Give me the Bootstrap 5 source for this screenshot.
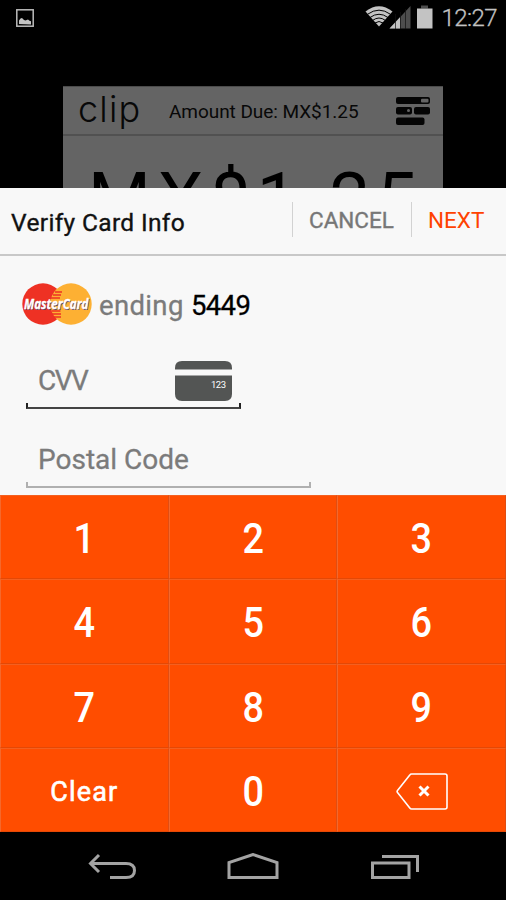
<!DOCTYPE html>
<html lang="en">
<head>
<meta charset="utf-8">
<meta name="viewport" content="width=device-width, initial-scale=1">
<title>Verify Card Info</title>
<link href="https://cdn.jsdelivr.net/npm/bootstrap@5.3.0/dist/css/bootstrap.min.css" rel="stylesheet">
<style>
  body { font-family: Roboto, "Liberation Sans", sans-serif; background: #000; }
  svg { display: block; flex: none; }
  .screen { width: 506px; height: 900px; background: #000; }
  .status { height: 36px; padding: 0 9px 0 16px; color: #c3c3c3; }
  .clock { font-size: 24px; line-height: 36px; letter-spacing: -.55px; font-weight: 300; -webkit-text-stroke: .3px #c3c3c3; }
  .behind { height: 152px; padding: 50px 63px 0; }
  .receipt { height: 102px; background: #646464; color: #080808; }
  .receipt-head { height: 50px; padding: 0 13px 0 15px; border-bottom: 2px solid #515151; border-top: 1px solid #4b4b4b; }
  .brand { font: 300 36px/44px Inter, Lato, sans-serif; letter-spacing: 1.2px; width: 91px; color: #080808; margin-top: -3px; }
  .due { font-size: 19px; letter-spacing: -.05px; line-height: 28px; margin-top: 3px; }
  .total { font-size: 72px; line-height: 84px; letter-spacing: 6.600px; padding: 22px 0 0 25px; color: #000; }
  .sheet { height: 307px; background: #f8f8f8; color: #111; }
  .sheet-head { height: 68px; border-bottom: 2px solid #c8c8c8; padding-left: 11px; }
  .sheet-title { font-size: 24.5px; line-height: 30px; margin-top: 4px; letter-spacing: .35px; -webkit-text-stroke: .35px #111; }
  .action { height: 35px; line-height: 36px; font-size: 22.5px; border-left: 1px solid #d2d2d2; padding: 0 0 0 16px; margin-bottom: 4px; background: none; }
  .cancel { width: 119px; color: #777; -webkit-text-stroke: .35px #777; }
  .next { width: 95px; color: #ff4200; }
  .ending { font-size: 27.5px; line-height: 34px; color: #7b7b7b; letter-spacing: .35px; padding-left: 6px; margin-top: 6px; -webkit-text-stroke: .3px; }
  .ending span { letter-spacing: -.6px; }
  .card-row { padding: 27px 0 0 22px; height: 92px; }
  .field { padding-left: 12px; font-size: 28px; color: #7b7b7b; margin-left: 26px; -webkit-text-stroke: .3px; }
  .field-cvv { height: 55px; padding-top: 11px; width: 215px; padding-right: 9px; }
  .field-cvv span { letter-spacing: -1.500px; }
  .field-cvv svg { -webkit-text-stroke: 0; }
  .field-zip { height: 73px; padding-top: 29px; }
  .bracket { height: 6px; border: 2px solid #222; border-top: 0; border-bottom-color: #444; margin-left: 26px; }
  .bracket-cvv { width: 215px; }
  .bracket-zip { width: 285px; border-color: #b0b0b0; }
  .pad { height: 337px; background: #ff4d00; }
  .digit { height: 84.25px; color: #fff; font-size: 43px; font-weight: 500; line-height: 1; border-left: 1px solid #f5682c; border-right: 1px solid #e04d12; border-top: 1px solid #f46020; border-bottom: 1px solid #e44805; padding-top: 3px; }
  .digit span { transform: scaleX(.88); }
  .digit .word { font-size: 27px; letter-spacing: 1.200px; transform: none; font-weight: 400; -webkit-text-stroke: .6px #fff; margin-top: 3px; }
  .navkeys { height: 68px; padding: 0 0 0 88px; color: #a3a3a3; }
</style>
</head>
<body>
<div class="screen d-flex flex-column overflow-hidden">
  <header class="status d-flex align-items-center justify-content-between">
    <svg width="18" height="18" viewBox="0 0 18 18"><rect x=".8" y=".8" width="16.4" height="16.4" fill="none" stroke="#bbb" stroke-width="1.500"/><path d="M3 15v-3.500l1.500-2 1.500-.500 2 2 1.500.500 2.500-1 1.500 1.300 1.500.5v3.200z" fill="#c3c3c3"/></svg>
    <div class="d-flex align-items-center">
      <svg width="76" height="28" viewBox="0 0 76 28">
        <path d="M14 22.500L.5 7.500Q14-3 27.500 7.500Z" fill="#c3c3c3"/>
        <g fill="none" stroke="#000" stroke-width="1"><path d="M2.500 10.300Q14 2 25.500 10.300"/><path d="M5 13.500Q14 7 23 13.500"/><path d="M7.500 16.500Q14 11.500 20.500 16.500"/><path d="M10 19Q14 16 18 19"/></g>
        <path d="M24.500 24.500L45.500 2V24.500Z" fill="#4d4d4d"/><path d="M24.500 24.500L35 13.200V24.500Z" fill="#c3c3c3"/>
        <path d="M30.500 10V25M35.500 8V25M40.500 5V25" stroke="#111" stroke-width=".7"/>
        <path d="M56 1.500h7v3h-7z" fill="#4d4d4d"/><path d="M52 4.500h15.500v20H52z" fill="#c3c3c3"/>
      </svg>
      <span class="clock">12:27</span>
    </div>
  </header>

  <div class="behind">
    <div class="receipt overflow-hidden">
      <div class="receipt-head d-flex align-items-center">
        <div class="brand">clip</div>
        <div class="due text-nowrap">Amount Due: MX$1.25</div>
        <svg class="ms-auto" width="34" height="28" viewBox="0 0 34 28"><g fill="#050505"><rect width="34" height="7" rx="2"/><rect y="10" width="16" height="7.500" rx="2"/><rect x="18" y="10" width="16" height="7.500" rx="2"/><rect y="20.500" width="28.500" height="7.500" rx="2"/></g><rect x="25" y="1.700" width="7.500" height="3.800" rx="1" fill="#646464"/><circle cx="12.500" cy="13.500" r="1.500" fill="#646464"/></svg>
      </div>
      <div class="total text-nowrap">MX$1.25</div>
    </div>
  </div>

  <main class="sheet">
    <div class="sheet-head d-flex align-items-center">
      <div class="sheet-title text-nowrap me-auto">Verify Card Info</div>
      <div class="action cancel">CANCEL</div>
      <div class="action next">NEXT</div>
    </div>
    <div class="card-row d-flex align-items-start">
      <svg width="71" height="42" viewBox="0 0 71 42">
        <circle cx="21" cy="21" r="20.700" fill="#ee3124"/><circle cx="49" cy="21" r="20.700" fill="#fdb033"/>
        <path d="M33 9h7M31 12h8M29 15h9M29.500 28h9M30 31h9M32 34h7" stroke="#ee3124" stroke-width="1.500" fill="none"/>
        <g font-family="Open Sans, sans-serif" font-weight="700" font-style="italic" font-size="15"><text x="2.600" y="26.700" textLength="64.500" lengthAdjust="spacingAndGlyphs" fill="#5c4668">MasterCard</text><text x="2" y="26" textLength="64.500" lengthAdjust="spacingAndGlyphs" fill="#fff" stroke="#fff" stroke-width=".3">MasterCard</text></g>
      </svg>
      <div class="ending text-nowrap">ending <span class="text-black">5449</span></div>
    </div>
    <div class="field field-cvv d-flex align-items-center justify-content-between">
      <span>CVV</span>
      <svg width="57" height="40" viewBox="0 0 57 40"><path d="M0 8.500V7q0-7 7-7h43q7 0 7 7v1.500zM0 14.500h57V33q0 7-7 7H7q-7 0-7-7z" fill="#535554"/><text x="36" y="27" font-size="9.500" textLength="15" fill="#fff">123</text></svg>
    </div>
    <div class="bracket bracket-cvv"></div>
    <div class="field field-zip d-flex align-items-center"><span>Postal Code</span></div>
    <div class="bracket bracket-zip"></div>
  </main>

  <section class="pad row row-cols-3 g-0">
    <div class="col digit d-flex align-items-center justify-content-center"><span>1</span></div>
    <div class="col digit d-flex align-items-center justify-content-center"><span>2</span></div>
    <div class="col digit d-flex align-items-center justify-content-center"><span>3</span></div>
    <div class="col digit d-flex align-items-center justify-content-center"><span>4</span></div>
    <div class="col digit d-flex align-items-center justify-content-center"><span>5</span></div>
    <div class="col digit d-flex align-items-center justify-content-center"><span>6</span></div>
    <div class="col digit d-flex align-items-center justify-content-center"><span>7</span></div>
    <div class="col digit d-flex align-items-center justify-content-center"><span>8</span></div>
    <div class="col digit d-flex align-items-center justify-content-center"><span>9</span></div>
    <div class="col digit d-flex align-items-center justify-content-center"><span class="word">Clear</span></div>
    <div class="col digit d-flex align-items-center justify-content-center"><span>0</span></div>
    <div class="col digit d-flex align-items-center justify-content-center">
      <svg width="52" height="37" viewBox="0 0 52 37" fill="none" stroke="#fff"><path d="M15.500 1H49q2 0 2 2v31q0 2-2 2H15.500q-1 0-1.700-1L1.500 19.500q-.8-1 0-2L13.800 2q.7-1 1.700-1z" stroke-width="1.600"/><path d="M23.500 13.500l9 9M32.500 13.500l-9 9" stroke-width="3"/></svg>
    </div>
  </section>

  <nav class="navkeys d-flex align-items-center">
    <svg class="mt-1" width="332" height="30" viewBox="0 0 332 30" fill="none" stroke="currentColor" stroke-width="3">
      <path d="M2.500 10.500H38Q46.500 10.500 46.500 17.500T38 24.500H22M11 2L2.500 10.500 11 19"/>
      <path d="M141 24.500V9.500L165 1.500 189 9.500V24.500Z"/>
      <path d="M284.500 10h36.500v14.500h-36.500zM294 3.500h35.500V19"/>
    </svg>
  </nav>
</div>
<script src="https://cdn.jsdelivr.net/npm/bootstrap@5.3.0/dist/js/bootstrap.bundle.min.js"></script>
</body>
</html>
